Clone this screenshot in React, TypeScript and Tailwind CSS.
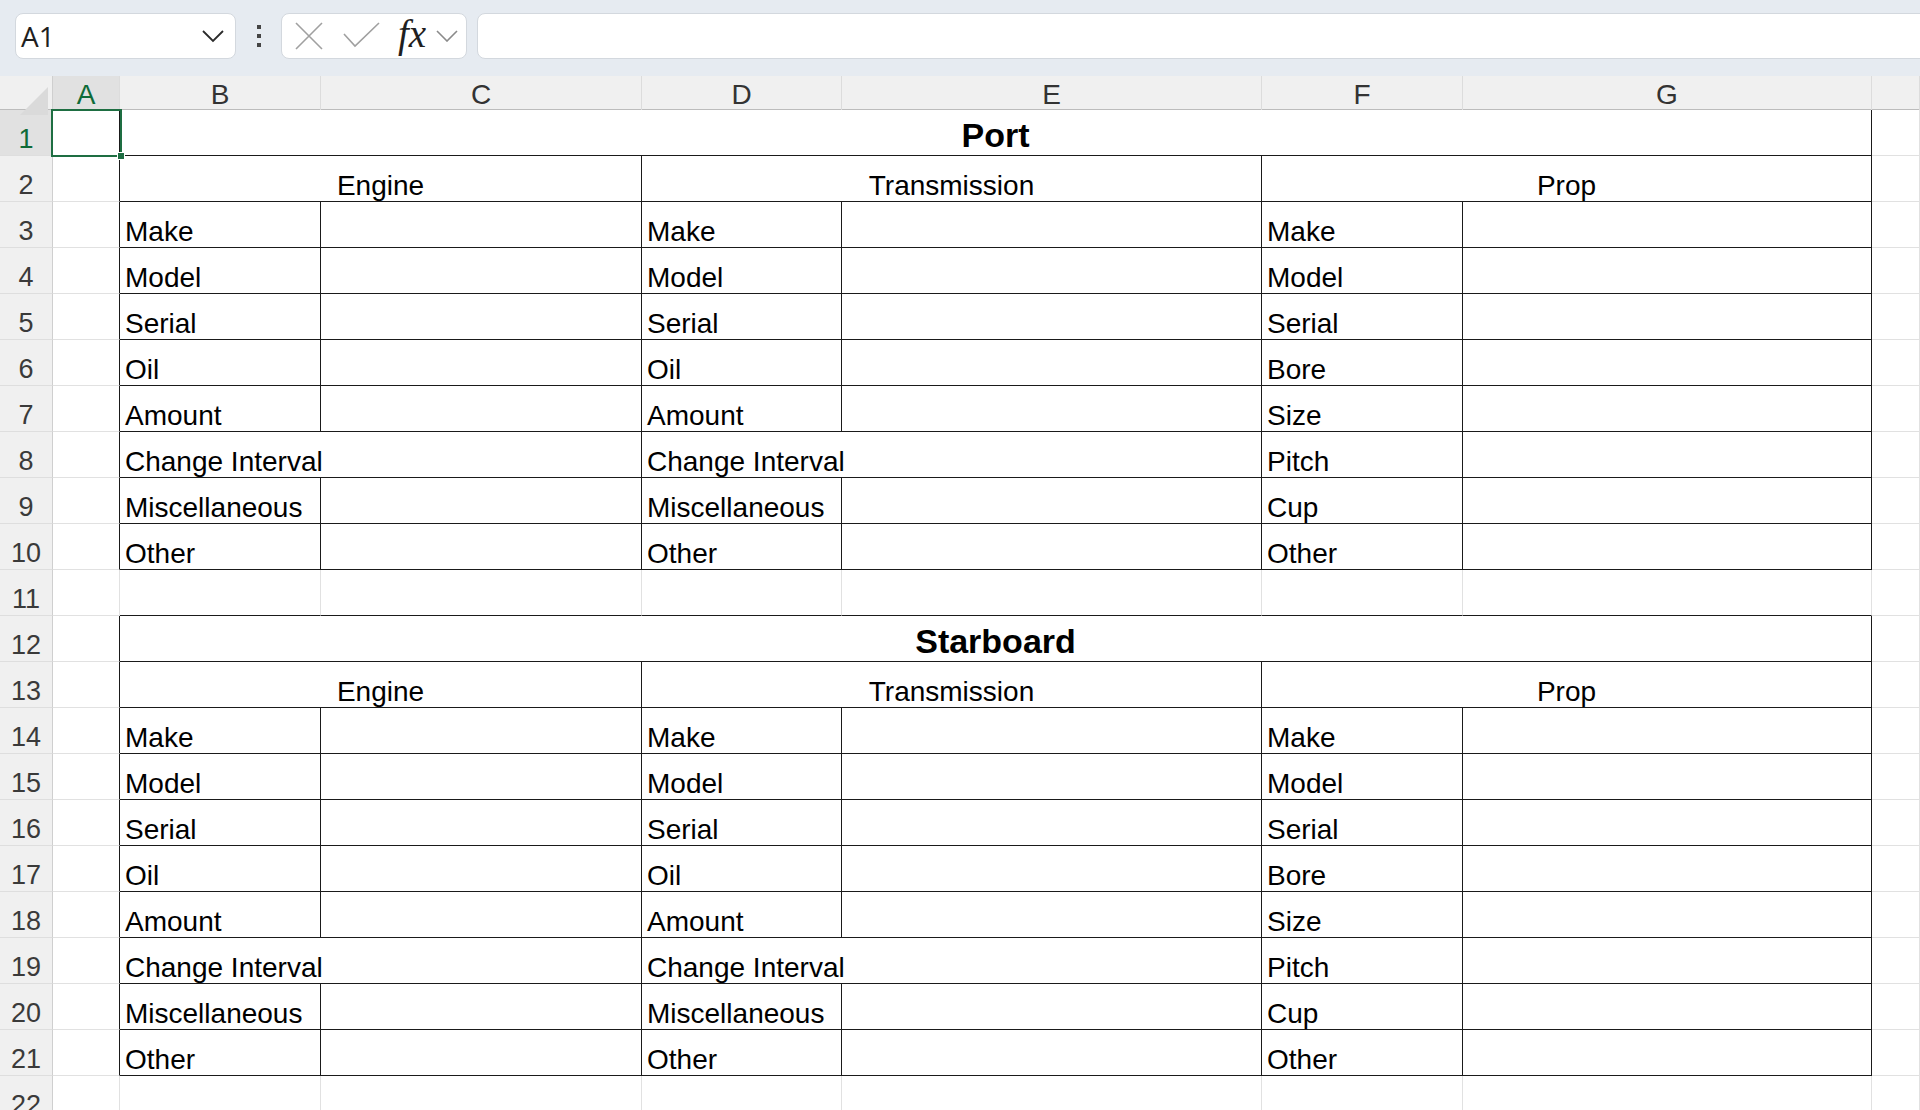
import React from "react";

type CellDef = {
  text?: string;
  span?: 1 | 2 | 6;
  align?: "left" | "center";
  bold?: boolean;
  r?: boolean;
  b?: boolean;
};

type RowDef = { n: number; aDark: boolean; cells: CellDef[] };

const GRID = "grid grid-cols-[53px_67px_201px_321px_200px_420px_201px_409px_1fr]";

const engine = ["Make", "Model", "Serial", "Oil", "Amount", "Change Interval", "Miscellaneous", "Other"];
const prop = ["Make", "Model", "Serial", "Bore", "Size", "Pitch", "Cup", "Other"];

function sectionRows(start: number, title: string): RowDef[] {
  const rows: RowDef[] = [];
  rows.push({
    n: start,
    aDark: true,
    cells: [{ text: title, span: 6, align: "center", bold: true, r: true, b: true }, {}],
  });
  rows.push({
    n: start + 1,
    aDark: true,
    cells: [
      { text: "Engine", span: 2, align: "center", r: true, b: true },
      { text: "Transmission", span: 2, align: "center", r: true, b: true },
      { text: "Prop", span: 2, align: "center", r: true, b: true },
      {},
    ],
  });
  engine.forEach((label, i) => {
    const merged = label === "Change Interval";
    const cells: CellDef[] = merged
      ? [
          { text: label, span: 2, r: true, b: true },
          { text: label, span: 2, r: true, b: true },
        ]
      : [
          { text: label, r: true, b: true },
          { r: true, b: true },
          { text: label, r: true, b: true },
          { r: true, b: true },
        ];
    cells.push({ text: prop[i], r: true, b: true }, { r: true, b: true }, {});
    rows.push({ n: start + 2 + i, aDark: true, cells });
  });
  return rows;
}

const rows: RowDef[] = [
  ...sectionRows(1, "Port"),
  {
    n: 11,
    aDark: false,
    cells: [{ b: true }, { b: true }, { b: true }, { b: true }, { b: true }, { b: true }, {}],
  },
  ...sectionRows(12, "Starboard"),
  { n: 22, aDark: false, cells: [{}, {}, {}, {}, {}, {}, {}] },
];

function Cell({ c }: { c: CellDef }) {
  const span = c.span === 6 ? "col-span-6" : c.span === 2 ? "col-span-2" : "";
  const rc = c.r ? "border-r-[#1a1a1a]" : "border-r-[#e1e1e1]";
  const bc = c.b ? "border-b-[#1a1a1a]" : "border-b-[#e1e1e1]";
  const al = c.align === "center" ? "justify-center" : "justify-start pl-[5px]";
  const font = c.bold ? "text-[34px] font-bold" : "text-[28px]";
  return (
    <div className={`${span} ${rc} ${bc} ${al} ${font} flex items-end border-r border-b bg-white text-black whitespace-nowrap overflow-visible h-[46px] leading-normal`}>
      {c.text ? <span className="relative top-[6px]">{c.text}</span> : null}
    </div>
  );
}

function Toolbar() {
  return (
    <div className="h-[76px] bg-[#e6ebf1] flex items-start pt-[13px] pl-[15px] overflow-hidden">
      <div className="shrink-0 w-[221px] h-[46px] bg-white rounded-[8px] border border-[#d3d8de] flex items-center justify-between pl-[5px] pr-[10px]">
        <span className="text-[28px] text-[#1f1f1f] leading-none" style={{ fontFamily: "'Open Sans','Liberation Sans',sans-serif" }}>A1</span>
        <svg width="24" height="14" viewBox="0 0 24 14">
          <path d="M2 2 L12 12 L22 2" fill="none" stroke="#2b2b2b" strokeWidth="1.8" />
        </svg>
      </div>
      <div className="shrink-0 w-[45px] h-[46px] flex flex-col items-center justify-center gap-[5px]">
        <div className="w-[4px] h-[4px] bg-[#444]" />
        <div className="w-[4px] h-[4px] bg-[#444]" />
        <div className="w-[4px] h-[4px] bg-[#444]" />
      </div>
      <div className="shrink-0 w-[186px] h-[46px] bg-white rounded-[8px] border border-[#d3d8de] flex items-center pl-[13px]">
        <svg width="28" height="28" viewBox="0 0 28 28" className="shrink-0">
          <path d="M1 1 L27 27 M27 1 L1 27" stroke="#a0a0a0" strokeWidth="1.6" fill="none" />
        </svg>
        <svg width="38" height="28" viewBox="0 0 38 28" className="shrink-0 ml-[20px]">
          <path d="M1 12 L12 24 L36 1" stroke="#a0a0a0" strokeWidth="1.6" fill="none" />
        </svg>
        <span className="shrink-0 ml-[17px] italic text-[39px] text-[#1f1f1f] leading-none -mt-[5px]" style={{ fontFamily: "'Liberation Serif','DejaVu Serif',serif" }}>fx</span>
        <svg width="22" height="12" viewBox="0 0 22 12" className="shrink-0 ml-[10px]">
          <path d="M1 1 L11 11 L21 1" fill="none" stroke="#8a8a8a" strokeWidth="1.6" />
        </svg>
      </div>
      <div className="shrink-0 ml-[10px] w-[1500px] h-[46px] bg-white rounded-l-[8px] border border-[#d3d8de]" />
    </div>
  );
}

function ColumnHeader() {
  const letters = ["A", "B", "C", "D", "E", "F", "G", ""];
  return (
    <div className={`${GRID} h-[34px] bg-[#f0f0f0] border-b border-b-[#bcbcbc]`}>
      <div className="relative border-r border-r-[#cfcfcf]">
        <svg width="30" height="30" viewBox="0 0 30 30" className="absolute right-[3px] bottom-[2px]">
          <path d="M29 1 L29 29 L1 29 Z" fill="#dadada" />
        </svg>
      </div>
      {letters.map((l, i) => (
        <div
          key={i}
          className={`flex items-end justify-center border-r border-r-[#dcdcdc] text-[28px] leading-normal ${i === 0 ? "bg-[#e1e1e1] text-[#0f6b38]" : "text-[#333333]"}`}
        >
          <span className="relative -top-[2px]">{l}</span>
        </div>
      ))}
    </div>
  );
}

function Row({ r }: { r: RowDef }) {
  const sel = r.n === 1;
  return (
    <div className={`${GRID} h-[46px]`}>
      <div
        className={`flex items-end justify-center border-r border-r-[#cfcfcf] border-b border-b-[#dedede] text-[27px] leading-normal ${sel ? "bg-[#e1e1e1] text-[#0f6b38]" : "bg-[#f0f0f0] text-[#3a3a3a]"}`}
      >
        <span className="relative top-[4px]">{r.n}</span>
      </div>
      <div className={`border-r border-b border-b-[#e1e1e1] bg-white ${r.aDark ? "border-r-[#1a1a1a]" : "border-r-[#e1e1e1]"}`} />
      {r.cells.map((c, i) => (
        <Cell key={i} c={c} />
      ))}
    </div>
  );
}

export default function App() {
  return (
    <div className="w-[1920px] h-[1110px] overflow-hidden bg-white" style={{ fontFamily: "'Liberation Sans', Arial, sans-serif" }}>
      <Toolbar />
      <div className="relative">
        <ColumnHeader />
        {rows.map((r) => (
          <Row key={r.n} r={r} />
        ))}
        <div className="absolute left-[51px] top-[33px] w-[71px] h-[48px] border-2 border-[#1e6e42] pointer-events-none">
          <div className="absolute -right-[5px] -bottom-[5px] w-[8px] h-[8px] bg-[#1e6e42] border border-white" />
        </div>
      </div>
    </div>
  );
}
